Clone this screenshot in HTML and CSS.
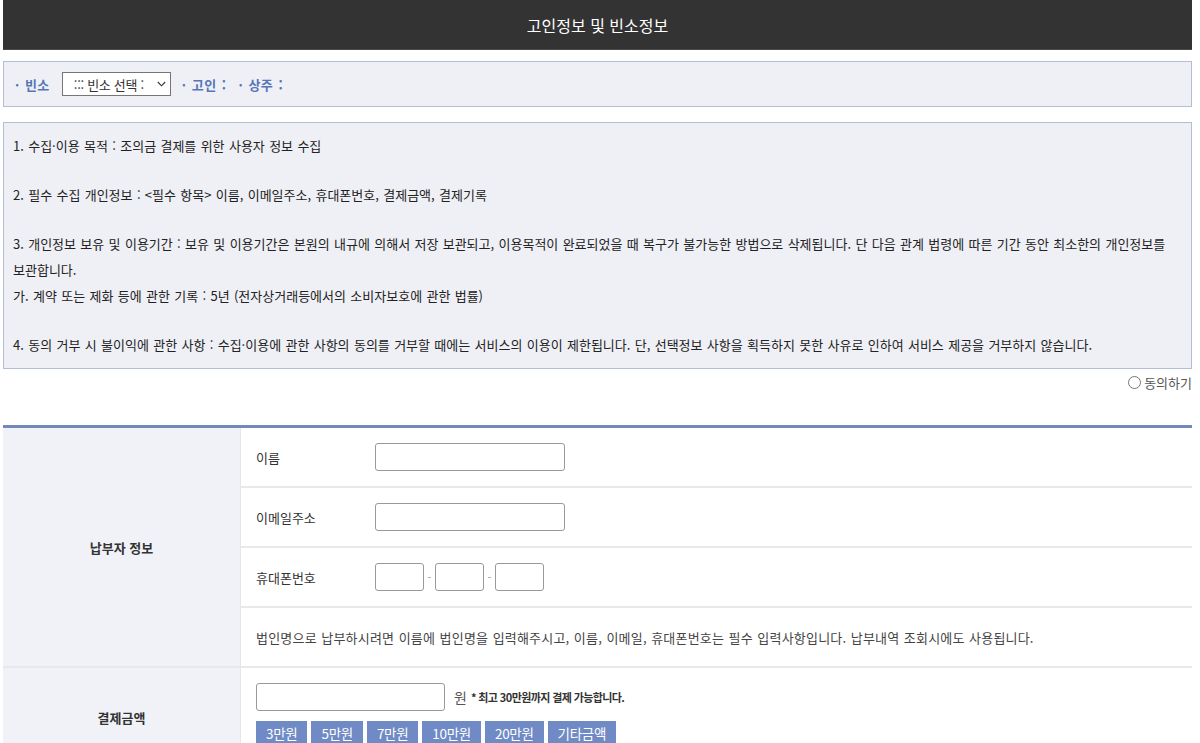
FILE: index.html
```html
<!DOCTYPE html>
<html lang="ko">
<head>
<meta charset="utf-8">
<title>고인정보 및 빈소정보</title>
<link rel="stylesheet" href="styles.css">
</head>
<body>
<div class="wrap">
  <div class="header">고인정보 및 빈소정보</div>

  <div class="info">
    <span class="info-label">· 빈소</span>
    <span class="select-box">
      <select class="select">
        <option>::: 빈소 선택 :</option>
      </select>
      <svg class="chev" width="9" height="6" viewBox="0 0 9 6"><path d="M0.8 1 L4.5 4.8 L8.2 1" fill="none" stroke="#333" stroke-width="1.1"/></svg>
    </span>
    <span class="info-label gap1">· 고인 :</span>
    <span class="info-label gap2">· 상주 :</span>
  </div>

  <div class="terms">
    <p>1. 수집·이용 목적 : 조의금 결제를 위한 사용자 정보 수집</p>
    <p>2. 필수 수집 개인정보 : &lt;필수 항목&gt; 이름, 이메일주소, 휴대폰번호, 결제금액, 결제기록</p>
    <p>3. 개인정보 보유 및 이용기간 : 보유 및 이용기간은 본원의 내규에 의해서 저장 보관되고, 이용목적이 완료되었을 때 복구가 불가능한 방법으로 삭제됩니다. 단 다음 관계 법령에 따른 기간 동안 최소한의 개인정보를 보관합니다.<br>가. 계약 또는 제화 등에 관한 기록 : 5년 (전자상거래등에서의 소비자보호에 관한 법률)</p>
    <p>4. 동의 거부 시 불이익에 관한 사항 : 수집·이용에 관한 사항의 동의를 거부할 때에는 서비스의 이용이 제한됩니다. 단, 선택정보 사항을 획득하지 못한 사유로 인하여 서비스 제공을 거부하지 않습니다.</p>
  </div>

  <div class="agree">
    <label class="agree-label"><span class="radio"></span>동의하기</label>
  </div>

  <div class="form">
    <div class="section">
      <div class="head">납부자 정보</div>
      <div class="rows">
        <div class="row">
          <span class="label">이름</span>
          <input class="input wide" type="text">
        </div>
        <div class="row">
          <span class="label">이메일주소</span>
          <input class="input wide" type="text">
        </div>
        <div class="row">
          <span class="label">휴대폰번호</span>
          <input class="input short" type="text">
          <span class="dash">-</span>
          <input class="input short" type="text">
          <span class="dash">-</span>
          <input class="input short" type="text">
        </div>
        <div class="row">
          <span class="note">법인명으로 납부하시려면 이름에 법인명을 입력해주시고, 이름, 이메일, 휴대폰번호는 필수 입력사항입니다. 납부내역 조회시에도 사용됩니다.</span>
        </div>
      </div>
    </div>
    <div class="section">
      <div class="head">결제금액</div>
      <div class="rows">
        <div class="pay">
          <div class="pay-line">
            <input class="input amount" type="text">
            <span class="won">원</span>
            <span class="limit">* 최고 30만원까지 결제 가능합니다.</span>
          </div>
          <div class="btns">
            <button class="btn">3만원</button>
            <button class="btn">5만원</button>
            <button class="btn">7만원</button>
            <button class="btn">10만원</button>
            <button class="btn">20만원</button>
            <button class="btn">기타금액</button>
          </div>
        </div>
      </div>
    </div>
  </div>
</div>
</body>
</html>
```

FILE: styles.css
```css
* { box-sizing: border-box; }

body {
  margin: 0;
  background: #fff;
  font-family: "Noto Sans CJK KR", "Noto Sans", sans-serif;
  font-size: 13px;
  color: #333;
}

.wrap {
  margin-left: 3px;
  width: 1189px;
}

.header {
  height: 50px;
  background: #333333;
  border-bottom: 1px solid #4a4a4a;
  color: #fff;
  font-size: 16px;
  display: flex;
  align-items: center;
  justify-content: center;
}

.info {
  margin-top: 11px;
  height: 46px;
  border: 1px solid #b3bdd5;
  background: #eff0f6;
  display: flex;
  align-items: center;
  padding-left: 11px;
}

.info-label {
  color: #5676b8;
  font-weight: bold;
  font-size: 13px;
  letter-spacing: 0.5px;
  word-spacing: 1px;
}

.gap1 { margin-left: 11px; }
.gap2 { margin-left: 12px; }

.select-box {
  position: relative;
  margin-left: 12px;
  display: inline-block;
}

.select {
  appearance: none;
  -webkit-appearance: none;
  width: 109px;
  height: 24px;
  border: 1px solid #767676;
  border-radius: 0;
  background: #fff;
  font-family: inherit;
  font-size: 13px;
  color: #333;
  padding: 0 0 0 11px;
  letter-spacing: -0.3px;
}

.chev {
  position: absolute;
  right: 5px;
  top: 9px;
  pointer-events: none;
}

.terms {
  margin-top: 15px;
  height: 247px;
  border: 1px solid #b3bdd5;
  background: #eff0f6;
  padding: 10px 9px 8px;
  color: #222;
  word-spacing: 0.7px;
  word-break: keep-all;
}

.terms p {
  margin: 0 0 23px;
  line-height: 26px;
}

.terms p:last-child { margin-bottom: 0; }

.agree {
  display: flex;
  justify-content: flex-end;
  margin-top: 2px;
  height: 22px;
  align-items: center;
}

.agree-label {
  display: flex;
  align-items: center;
  color: #555;
  font-size: 13px;
}

.radio {
  width: 13px;
  height: 13px;
  border: 1px solid #767676;
  border-radius: 50%;
  margin-right: 3px;
  background: #fff;
}

.form {
  margin-top: 32px;
  border-top: 3px solid #7389ba;
}

.section {
  display: flex;
  border-bottom: 2px solid #e8e8e8;
}

.head {
  width: 238px;
  flex: none;
  background: #f1f2f7;
  border-right: 1px solid #e6e6e6;
  display: flex;
  align-items: center;
  justify-content: center;
  font-weight: bold;
  color: #333;
}

.rows {
  flex: 1;
}

.row {
  height: 60px;
  display: flex;
  align-items: center;
  padding-left: 15px;
  border-bottom: 2px solid #e8e8e8;
}

.row:last-child { border-bottom: none; height: 58px; }

.label {
  width: 119px;
  flex: none;
  color: #333;
}

.input {
  height: 28px;
  border: 1px solid #999;
  border-radius: 3px;
  background: #fff;
  font-family: inherit;
}

.wide { width: 190px; }
.short { width: 49px; }
.amount { width: 189px; }

.dash {
  width: 11px;
  text-align: center;
  color: #999;
  font-size: 11px;
}

.note {
  color: #444;
  letter-spacing: 0.2px;
  word-spacing: 0.6px;
}

.pay {
  padding: 15px 15px 16px;
}

.pay-line {
  display: flex;
  align-items: center;
}

.won {
  margin-left: 9px;
  font-size: 14px;
  color: #555;
}

.limit {
  margin-left: 4px;
  font-size: 11px;
  font-weight: bold;
  color: #333;
  letter-spacing: -0.6px;
}

.btns {
  display: flex;
  gap: 4px;
  margin-top: 10px;
}

.btn {
  height: 30px;
  padding: 0 10px 6px;
  border: none;
  background: #6f8ac4;
  color: #fff;
  font-family: inherit;
  font-size: 13.5px;
  letter-spacing: -0.3px;
  line-height: 22px;
}
```
